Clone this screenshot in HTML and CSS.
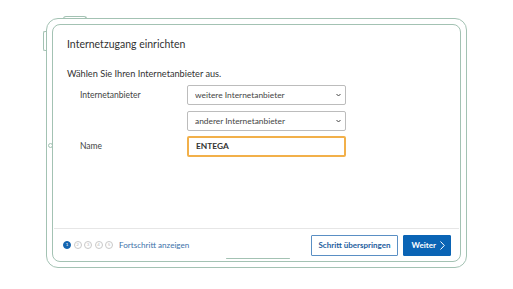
FILE: index.html
```html
<!DOCTYPE html>
<html>
<head>
    <title>Internetzugang einrichten</title>
    <link rel="stylesheet" href="styles.css">
</head>
<body>
    <div class="tablet">
        <span class="btn-top"></span>
        <span class="btn-side"></span>
        <span class="camera"></span>
        <div class="screen">
            <div class="content">
                <h1 class="title">Internetzugang einrichten</h1>
                <p class="intro">Wählen Sie Ihren Internetanbieter aus.</p>
                <div class="form">
                    <label class="label" for="isp">Internetanbieter</label>
                    <select id="isp" class="field select">
                        <option>weitere Internetanbieter</option>
                    </select>
                    <span class="label"></span>
                    <select class="field select">
                        <option>anderer Internetanbieter</option>
                    </select>
                    <label class="label" for="name">Name</label>
                    <input id="name" class="field text-field" type="text" value="ENTEGA">
                </div>
            </div>
            <div class="footer">
                <div class="steps">
                    <span class="step active">1</span>
                    <span class="step">2</span>
                    <span class="step">3</span>
                    <span class="step">4</span>
                    <span class="step">5</span>
                    <a class="progress-link" href="#">Fortschritt anzeigen</a>
                </div>
                <div class="actions">
                    <button class="button secondary">Schritt überspringen</button>
                    <button class="button primary">Weiter
                        <svg class="chev" width="5" height="9" viewBox="0 0 5 9"><path d="M0.5 0.5 L4.3 4.5 L0.5 8.5" fill="none" stroke="#fff" stroke-width="1"/></svg>
                    </button>
                </div>
            </div>
            <span class="home-bar"></span>
        </div>
    </div>
</body>
</html>
```

FILE: styles.css
```css
body { margin: 0; background: #fff; font-family: Lato, "Liberation Sans", sans-serif; color: #333; }

.tablet { position: relative; width: 421px; height: 250px; margin: 18px 0 0 46px; border: 1.5px solid #a3c2b3; border-radius: 12px; padding: 5px; box-sizing: border-box; }
.btn-top { position: absolute; top: -3px; left: 16px; width: 22px; height: 2px; border: 1px solid #a3c2b3; border-bottom: none; border-radius: 3px 3px 0 0; }
.btn-side { position: absolute; top: 12px; left: -4px; width: 2px; height: 18px; border: 1px solid #a3c2b3; border-right: none; border-radius: 2px 0 0 2px; }
.camera { position: absolute; top: 124px; left: 1px; width: 3px; height: 3px; border: 1px solid #a3c2b3; border-radius: 50%; }

.screen { position: relative; height: 100%; border: 1px solid #a3c2b3; border-radius: 8px; box-sizing: border-box; display: flex; flex-direction: column; }
.content { flex: 1; padding: 13px 14px 0; }
.title { margin: 0; font-size: 10.5px; font-weight: normal; color: #333; }
.intro { margin: 18px 0 6px; font-size: 9.2px; color: #333; }

.form { display: grid; grid-template-columns: 107px 159px; grid-auto-rows: 20px; row-gap: 5.5px; margin-left: 13px; align-items: center; }
.label { font-size: 8.5px; line-height: 10px; color: #444; }
.field { height: 20px; box-sizing: border-box; font-family: inherit; font-size: 8.4px; color: #444; border: 1px solid #bcbcbc; border-radius: 2px; background: #fff; padding: 0 7px; }
.select { appearance: none; -webkit-appearance: none; background: #fff url("data:image/svg+xml,%3Csvg xmlns='http://www.w3.org/2000/svg' width='5' height='4' viewBox='0 0 5 4'%3E%3Cpath d='M0.5 1 L2.5 3 L4.5 1' fill='none' stroke='%23444' stroke-width='1'/%3E%3C/svg%3E") no-repeat right 4px center; }
.text-field { height: 21px; border: 2px solid #f2b04a; font-weight: bold; color: #333; outline: none; }

.footer { height: 32px; border-top: 1px solid #e6e6e6; margin: 0 1px; display: flex; align-items: center; justify-content: space-between; padding: 0 12px 0 9px; }
.steps { display: flex; align-items: center; gap: 2.5px; }
.step { width: 6px; height: 6px; border: 1px solid #c8c8c8; border-radius: 50%; font-size: 4.5px; line-height: 6px; text-align: center; color: #bbb; }
.step.active { background: #1565b0; border-color: #1565b0; color: #fff; }
.progress-link { margin-left: 3.5px; font-size: 8.1px; color: #3d73aa; text-decoration: none; }

.actions { display: flex; gap: 5px; margin-right: -4px; }
.button { height: 21px; font-family: inherit; font-size: 8px; font-weight: bold; border-radius: 1px; padding: 0 7px; cursor: pointer; display: flex; align-items: center; gap: 4px; }
.secondary { background: #fff; color: #1e5e9e; border: 1px solid #5a8fc4; padding: 0 6px; }
.primary { background: #0a64b5; color: #fff; border: 1px solid #0a64b5; padding: 0 5px 0 8px; }

.home-bar { position: absolute; bottom: 2px; left: 173px; width: 64px; height: 1.5px; background: #a3c2b3; border-radius: 1px; }
```
